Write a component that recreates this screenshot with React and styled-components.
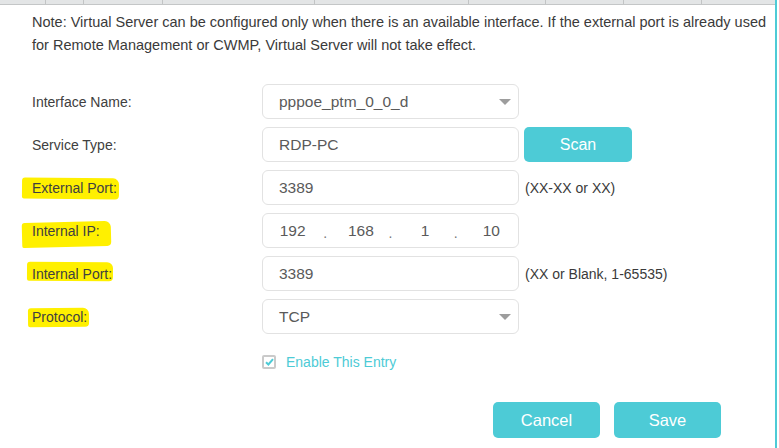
import React from 'react';
import styled, { createGlobalStyle } from 'styled-components';

const teal = '#4dcbd6';
const rowHeight = 35; //px

const GlobalStyle = createGlobalStyle`
  html, body {
    margin: 0;
    padding: 0;
    background: #fff;
  }
  body {
    font-family: "Liberation Sans", Arial, sans-serif;
    color: #333;
  }
`;

export const Panel = styled.div`
  width: 777px;
  height: 448px;
  border-right: solid 2px ${teal};
  box-sizing: border-box;
  display: flex;
  flex-direction: column;
`;

export const TableHead = styled.div`
  height: 4px;
  background: #e3e5e6;
  border-bottom: solid 1px #c4c6c7;
  display: grid;
  grid-template-columns: 46px 38px 79px 152px 154px 77px 78px 78px 1fr;
  flex-shrink: 0;

  span {
    border-right: solid 1px #c2c4c5;
  }
  span:last-child {
    border-right: none;
  }
`;

export const Note = styled.p`
  margin: 0;
  padding: 6px 0 0 32px;
  font-size: 14.5px;
  line-height: 23px;
  color: #3a3a3a;
  white-space: nowrap;
`;

export const Form = styled.div`
  display: grid;
  grid-template-columns: 230px 257px auto;
  grid-auto-rows: ${rowHeight}px;
  row-gap: 8px;
  padding: 27px 0 0 32px;
  align-items: center;
`;

export const Label = styled.div`
  font-size: 14px;
  color: #404040;
  display: flex;
  align-items: center;
  height: 100%;
`;

export const Marked = styled.span`
  position: relative;
  z-index: 0;

  &::before {
    content: '';
    position: absolute;
    z-index: -1;
    top: ${({ $m }) => $m[0]}px;
    right: ${({ $m }) => $m[1]}px;
    bottom: ${({ $m }) => $m[2]}px;
    left: ${({ $m }) => $m[3]}px;
    background: #fff000;
    border-radius: 3px 6px 4px 2px;
    transform: rotate(${({ $tilt }) => $tilt || 0}deg);
  }
`;

export const Field = styled.div`
  position: relative;
  height: ${rowHeight}px;
  box-sizing: border-box;
  border: solid 1px #e2e2e2;
  border-radius: 6px;
  background: #fff;
  display: flex;
  align-items: center;
  padding-left: 16px;
  font-size: 15.5px;
  color: #5a5a5a;
`;

export const Arrow = styled.span`
  position: absolute;
  right: 7px;
  top: 14px;
  width: 0;
  height: 0;
  border-left: 6px solid transparent;
  border-right: 6px solid transparent;
  border-top: 6px solid #9d9d9d;
`;

export const IpField = styled(Field)`
  padding-left: 0;
  display: grid;
  grid-template-columns: 1fr 6px 1fr 6px 1fr 6px 1fr;
`;

export const Octet = styled.span`
  text-align: center;
  padding-left: ${({ $shift }) => $shift || 0}px;
`;

export const Dot = styled.span`
  text-align: center;
  font-size: 14px;
  color: #777;
  padding-top: 4px;
`;

export const Hint = styled.div`
  font-size: 14px;
  color: #3a3a3a;
  padding-left: 6px;
`;

export const Button = styled.button`
  height: 36px;
  width: ${({ $w }) => $w || 107}px;
  border: none;
  border-radius: 5px;
  background: ${teal};
  color: #fff;
  font-family: "Liberation Sans", Arial, sans-serif;
  font-size: 16.5px;
  padding: 0;
  cursor: pointer;
`;

export const ScanButton = styled(Button)`
  margin-left: 5px;
  height: 35px;
  font-size: 16px;
`;

export const CheckRow = styled.label`
  display: flex;
  align-items: center;
  gap: 10px;
  padding: 20px 0 0 262px;
  font-size: 14px;
  color: ${teal};
`;

export const CheckBox = styled.span`
  width: 14px;
  height: 14px;
  box-sizing: border-box;
  border: solid 2px #cacaca;
  border-radius: 2px;
  display: flex;
  align-items: center;
  justify-content: center;
`;

export const Actions = styled.div`
  display: flex;
  gap: 14px;
  padding: 32px 0 0 493px;
`;

const rows = [
  { label: 'Interface Name:', value: 'pppoe_ptm_0_0_d', select: true },
  { label: 'Service Type:', value: 'RDP-PC', scan: true },
  { label: 'External Port:', value: '3389', hint: '(XX-XX or XX)', mark: [-2, -2, -3, -10], tilt: 0.5 },
  { label: 'Internal IP:', ip: ['192', '168', '1', '10'], mark: [-1, -11, -8, -10], tilt: -1.5 },
  { label: 'Internal Port:', value: '3389', hint: '(XX or Blank, 1-65535)', mark: [-4, -1, 1, -5], tilt: 0.4 },
  { label: 'Protocol:', value: 'TCP', select: true, mark: [-1, -2, -2, -4], tilt: -0.6 },
];

const shifts = [0, 6, 4, 6];

export default function App() {
  return (
    <>
      <GlobalStyle />
      <Panel>
        <TableHead>
          {Array.from({ length: 9 }).map((_, i) => <span key={i} />)}
        </TableHead>
        <Note>
          Note: Virtual Server can be configured only when there is an available interface. If the external port is already used
          <br />
          for Remote Management or CWMP, Virtual Server will not take effect.
        </Note>
        <Form>
          {rows.map(row => (
            <React.Fragment key={row.label}>
              <Label>
                {row.mark
                  ? <Marked $m={row.mark} $tilt={row.tilt}>{row.label}</Marked>
                  : row.label}
              </Label>
              {row.ip ? (
                <IpField>
                  {row.ip.map((o, i) => (
                    <React.Fragment key={i}>
                      {i > 0 && <Dot>.</Dot>}
                      <Octet $shift={shifts[i]}>{o}</Octet>
                    </React.Fragment>
                  ))}
                </IpField>
              ) : (
                <Field>
                  {row.value}
                  {row.select && <Arrow />}
                </Field>
              )}
              <div>
                {row.scan && <ScanButton $w={108}>Scan</ScanButton>}
                {row.hint && <Hint>{row.hint}</Hint>}
              </div>
            </React.Fragment>
          ))}
        </Form>
        <CheckRow>
          <CheckBox>
            <svg width="9" height="8" viewBox="0 0 9 8">
              <path d="M1 4.2 L3.4 6.5 L8 1.2" fill="none" stroke={teal} strokeWidth="2" />
            </svg>
          </CheckBox>
          Enable This Entry
        </CheckRow>
        <Actions>
          <Button>Cancel</Button>
          <Button>Save</Button>
        </Actions>
      </Panel>
    </>
  );
}
